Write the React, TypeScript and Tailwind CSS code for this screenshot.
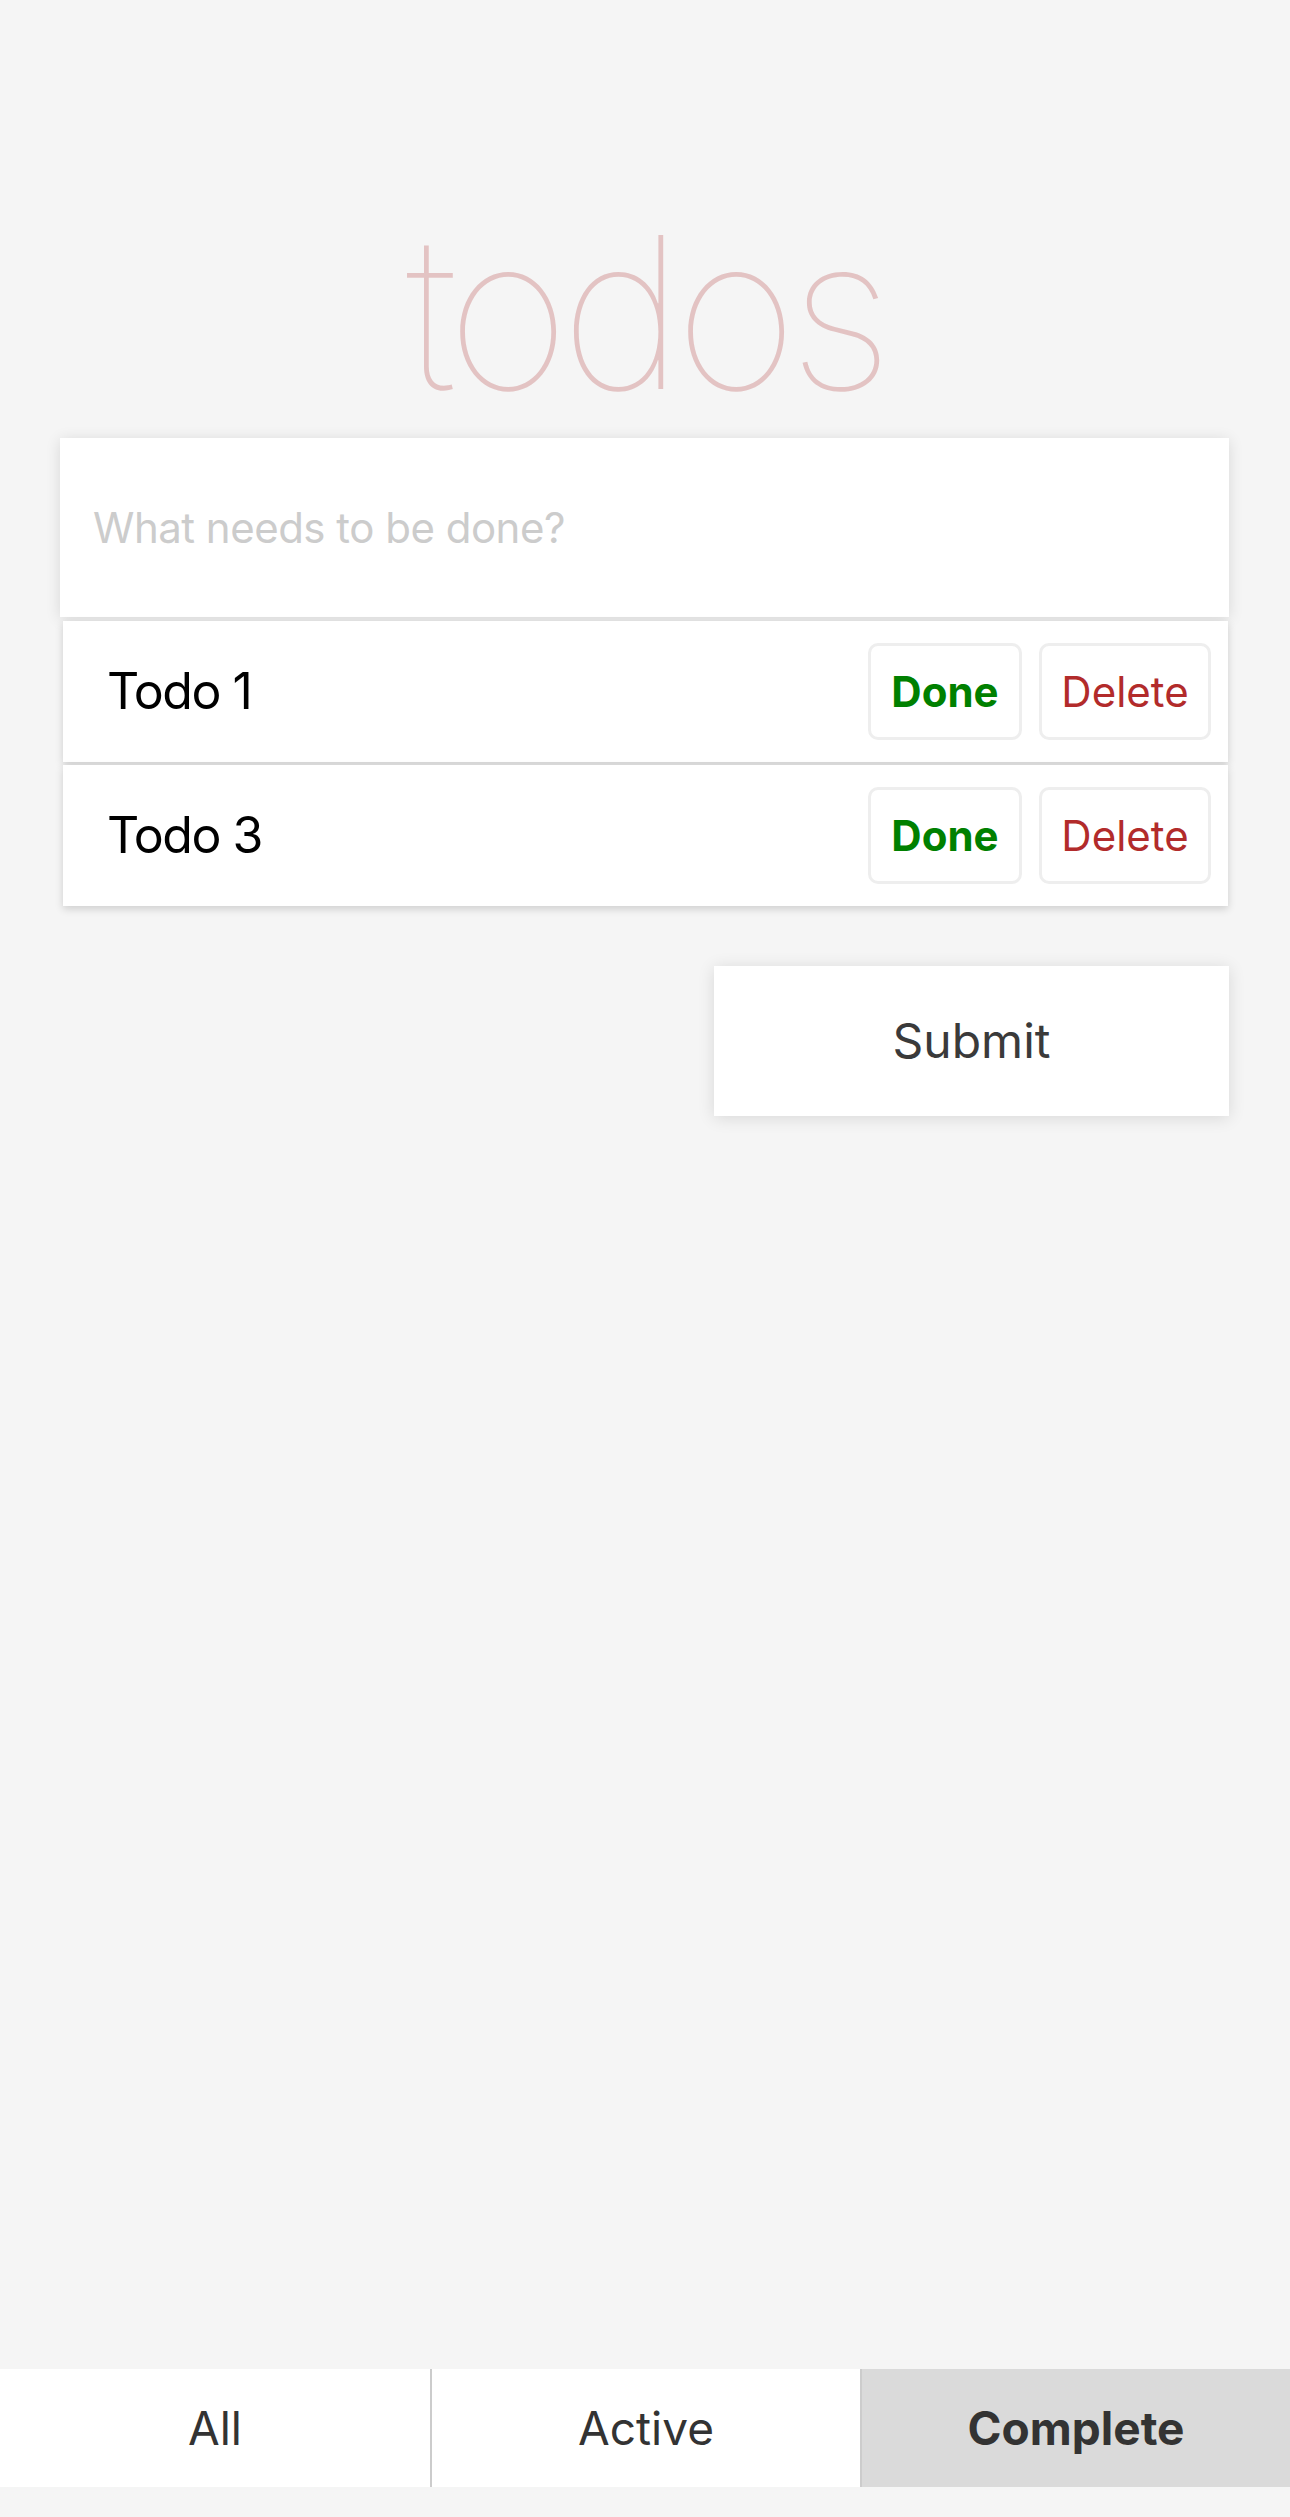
import { useState } from 'react';

type Todo = { id: number; title: string; done: boolean };

const initialTodos: Todo[] = [
  { id: 1, title: 'Todo 1', done: false },
  { id: 3, title: 'Todo 3', done: false },
];

const filters = ['All', 'Active', 'Complete'];

export default function App() {
  const [todos, setTodos] = useState<Todo[]>(initialTodos);
  const [text, setText] = useState('');
  const [filter, setFilter] = useState('Complete');

  const remove = (id: number) => setTodos((t) => t.filter((x) => x.id !== id));
  const toggle = (id: number) =>
    setTodos((t) => t.map((x) => (x.id === id ? { ...x, done: !x.done } : x)));

  return (
    <div
      className="flex min-h-[2517px] flex-col bg-[#f5f5f5]"
      style={{ fontFamily: 'Inter, "Liberation Sans", sans-serif' }}
    >
      <h1 className="flex h-[438px] items-end justify-center pb-[20px] text-[212px] leading-none font-thin tracking-[-9px] text-[rgba(175,47,47,0.25)]">
        todos
      </h1>

      <div className="ml-[60px] mr-[61px]">
        <input
          className="block h-[179px] w-full bg-white px-[33px] text-[42px] tracking-[-0.5px] text-[#333] shadow-[0_2px_14px_rgba(0,0,0,0.12)] outline-none placeholder:text-[#cccccc]"
          placeholder="What needs to be done?"
          value={text}
          onChange={(e) => setText(e.target.value)}
        />

        <ul className="ml-[3px] mr-[1px] mt-[4px] flex flex-col gap-[3px]">
          {todos.map((todo) => (
            <li
              key={todo.id}
              className="flex h-[141px] items-center bg-white pl-[44px] pr-[17px] shadow-[0_3px_8px_rgba(0,0,0,0.16)]"
            >
              <span className="flex-1 text-[50px] tracking-[-1.5px] text-black">{todo.title}</span>
              <div className="flex gap-[17px]">
                <button
                  onClick={() => toggle(todo.id)}
                  className="h-[97px] w-[154px] rounded-[10px] border-[3px] border-[#eeeeee] text-[42px] font-bold text-[#008000]"
                >
                  Done
                </button>
                <button
                  onClick={() => remove(todo.id)}
                  className="h-[97px] w-[172px] rounded-[10px] border-[3px] border-[#eeeeee] text-[42px] text-[#b22b2b]"
                >
                  Delete
                </button>
              </div>
            </li>
          ))}
        </ul>

        <div className="mt-[60px] flex justify-end">
          <button className="h-[150px] w-[515px] bg-white text-[48px] text-[#3a3a3a] shadow-[0_2px_16px_rgba(0,0,0,0.12)]">
            Submit
          </button>
        </div>
      </div>

      <nav className="mt-auto mb-[30px] grid h-[118px] grid-cols-3">
        {filters.map((f, i) => (
          <button
            key={f}
            onClick={() => setFilter(f)}
            className={`text-[46px] text-[#333] ${i > 0 ? 'border-l-[2px] border-[#cccccc]' : ''} ${
              filter === f ? 'bg-[#dadada] font-bold' : 'bg-white'
            }`}
          >
            {f}
          </button>
        ))}
      </nav>
    </div>
  );
}
